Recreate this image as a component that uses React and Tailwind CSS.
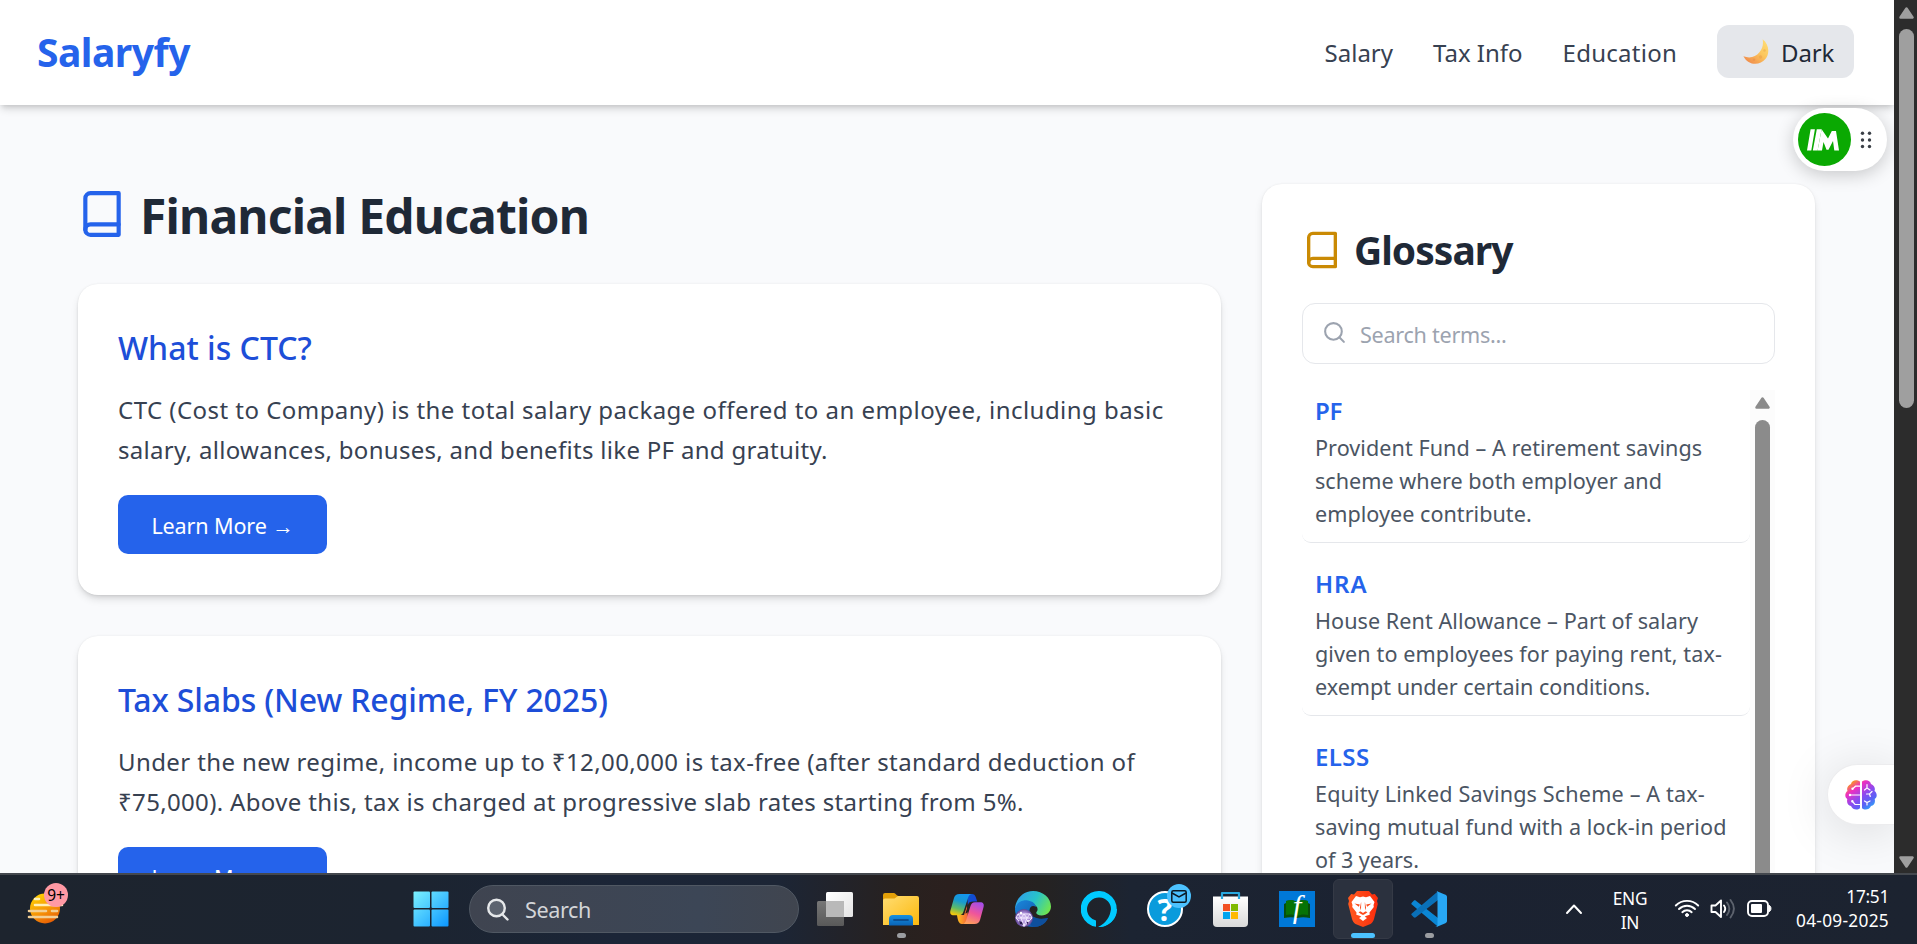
import React from "react";
import { FiBook, FiSearch } from "react-icons/fi";

const GLOSSARY = [
  {
    term: "PF",
    track: "tracking-[-0.3px]",
    lines: [
      ["Provident Fund – A retirement savings", "tracking-[0.05px]"],
      ["scheme where both employer and", "tracking-[0.02px]"],
      ["employee contribute.", "tracking-[0.02px]"],
    ],
  },
  {
    term: "HRA",
    track: "tracking-[0.9px]",
    lines: [
      ["House Rent Allowance – Part of salary", "tracking-[0.05px]"],
      ["given to employees for paying rent, tax-", "tracking-[0.09px]"],
      ["exempt under certain conditions.", "tracking-[-0.02px]"],
    ],
  },
  {
    term: "ELSS",
    track: "tracking-[0.4px]",
    lines: [
      ["Equity Linked Savings Scheme – A tax-", "tracking-[0.15px]"],
      ["saving mutual fund with a lock-in period", "tracking-[0.1px]"],
      ["of 3 years.", "tracking-[-0.05px]"],
    ],
  },
];

const ARTICLES = [
  {
    title: "What is CTC?",
    track: "tracking-normal",
    lines: [
      ["CTC (Cost to Company) is the total salary package offered to an employee, including basic", "tracking-[0.46px]"],
      ["salary, allowances, bonuses, and benefits like PF and gratuity.", "tracking-[0.3px]"],
    ],
  },
  {
    title: "Tax Slabs (New Regime, FY 2025)",
    track: "tracking-[-0.14px]",
    lines: [
      ["Under the new regime, income up to ₹12,00,000 is tax-free (after standard deduction of", "tracking-[0.39px]"],
      ["₹75,000). Above this, tax is charged at progressive slab rates starting from 5%.", "tracking-[0.34px]"],
    ],
  },
];

function Moon() {
  return (
    <svg width="26" height="26" viewBox="0 0 26 26">
      <defs>
        <linearGradient id="moon" x1="1" y1="0" x2="0.2" y2="1">
          <stop offset="0" stopColor="#ffe07a" />
          <stop offset="0.5" stopColor="#fcc65c" />
          <stop offset="1" stopColor="#f08a4b" />
        </linearGradient>
      </defs>
      <path d="M19.6 .2c6.300 4.700 7.600 14 2.800 19.800C17 26.800 5.400 27 .4 17.300c6.200 2.300 12.300.9 16-4C19.800 9.300 20.500 5 19.600.2z" fill="url(#moon)" />
      <circle cx="17.500" cy="18" r="1.700" fill="#eda64c" opacity=".7" />
      <circle cx="21.500" cy="11.500" r="1.200" fill="#eeb04f" opacity=".7" />
      <circle cx="11" cy="20.800" r="1.300" fill="#e9904a" opacity=".7" />
    </svg>
  );
}

function Header() {
  return (
    <header className="relative z-10 flex h-[105px] shrink-0 items-center justify-between bg-white pr-10 pl-[37px] shadow-[0_5px_8px_-1px_rgba(0,0,0,0.14),0_3px_5px_-2px_rgba(0,0,0,0.12)]">
      <span className="mb-px text-[39px] leading-[50px] font-bold tracking-[-0.5px] text-[#2563eb]">Salaryfy</span>
      <nav className="flex items-center gap-10 text-[24px] leading-[36px] text-[#374151]">
        <span>Salary</span>
        <span>Tax Info</span>
        <span className="tracking-[0.25px]">Education</span>
        <span className="mb-[2px] flex h-[53px] w-[137px] items-center rounded-[12px] bg-[#e5e7eb] pl-[26px] text-[#1f2937]">
          <Moon />
          <span className="ml-[12px] pt-[2px] tracking-[-0.1px]">Dark</span>
        </span>
      </nav>
    </header>
  );
}

function Article({ item }) {
  return (
    <article className="h-[311px] shrink-0 rounded-[20px] bg-white p-10 shadow-[0_0_2px_rgba(0,0,0,0.08),0_5px_8px_-1px_rgba(0,0,0,0.12),0_3px_5px_-2px_rgba(0,0,0,0.1)]">
      <h2 className={"text-[32px] leading-[48px] font-medium text-[#1d4ed8] " + item.track}>{item.title}</h2>
      <div className="mt-[18px] text-[24px] leading-[40px] whitespace-nowrap text-[#374151]">
        {item.lines.map(([text, track]) => (
          <p key={text} className={track}>{text}</p>
        ))}
      </div>
      <button className="mt-[25px] flex h-[59px] w-[209px] items-center justify-center rounded-[10px] bg-[#2563eb] pt-[3px] text-[21.6px] tracking-[-0.15px] whitespace-nowrap text-white">
        Learn More →
      </button>
    </article>
  );
}

function Glossary() {
  return (
    <aside className="h-[900px] w-[553px] shrink-0 rounded-[20px] bg-white p-10 shadow-[0_0_2px_rgba(0,0,0,0.08),0_5px_8px_-1px_rgba(0,0,0,0.12)]">
      <h2 className="flex h-[52px] items-center text-[#1f2937]">
        <FiBook className="text-[40px] text-[#ca8a04]" />
        <span className="mb-px ml-[12px] text-[39px] leading-[52px] font-bold tracking-[-1px]">Glossary</span>
      </h2>
      <div className="mt-[27px] flex h-[61px] items-center rounded-[13px] border border-[#e5e7eb] pl-[19px] text-[#9ca3af]">
        <FiSearch className="mb-[2px] text-[25px]" />
        <span className="ml-[13px] pt-[3px] text-[21.6px] leading-[30px] tracking-[-0.28px]">Search terms...</span>
      </div>
      <div className="mt-[26px] flex h-[520px]">
        <ul className="flex w-[448px] flex-col gap-[20px]">
          {GLOSSARY.map((g) => (
            <li key={g.term} className="h-[153px] shrink-0 rounded-[9px] border-b border-[#e5e7eb] px-[13px] pt-[3px]">
              <h3 className={"text-[24px] leading-[36px] font-semibold text-[#2563eb] " + g.track}>{g.term}</h3>
              <div className="mt-[2px] text-[21.6px] leading-[33px] whitespace-nowrap text-[#4b5563]">
                {g.lines.map(([text, track]) => (
                  <p key={text} className={track}>{text}</p>
                ))}
              </div>
            </li>
          ))}
        </ul>
        <div className="flex w-[25px] flex-col items-center bg-[#fcfcfc] pt-[7px]">
          <svg width="15" height="12" viewBox="0 0 15 12">
            <path d="M7.500 1.500L13.500 10.500H1.500z" fill="#8b8b8b" stroke="#8b8b8b" strokeWidth="2.500" strokeLinejoin="round" />
          </svg>
          <div className="mt-[11px] w-[15px] flex-1 rounded-t-full bg-[#8b8b8b]" />
        </div>
      </div>
    </aside>
  );
}

function PageScrollbar() {
  return (
    <div className="flex h-full w-[23px] shrink-0 flex-col items-center bg-[#2c2c2c] pt-[7px] pb-[5px] pl-px">
      <svg width="15" height="12" viewBox="0 0 15 12">
        <path d="M7.500 1.500L13.500 10.500H1.500z" fill="#9f9f9f" stroke="#9f9f9f" strokeWidth="2.500" strokeLinejoin="round" />
      </svg>
      <div className="mt-[10px] h-[379px] w-[15px] rounded-full bg-[#9f9f9f]" />
      <svg className="mt-auto" width="15" height="12" viewBox="0 0 15 12">
        <path d="M7.500 10.500L13.500 1.500H1.500z" fill="#9f9f9f" stroke="#9f9f9f" strokeWidth="2.500" strokeLinejoin="round" />
      </svg>
    </div>
  );
}

function FloatingPill() {
  return (
    <div className="absolute top-[108px] left-[1793px] z-20 flex h-[63px] w-[94px] items-center rounded-full bg-white pl-[5px] shadow-[0_4px_18px_rgba(0,0,0,0.2)]">
      <svg width="53" height="53" viewBox="0 0 53 53">
        <circle cx="26.500" cy="26.500" r="26.500" fill="#0aa902" />
        <path d="M12.600 16.300h4.300L13.300 37.500H9zM18.800 16.300h4.800L19.600 37.500h-4.800z" fill="#fff" />
        <path d="M23.600 16.300L30 25.500L33.800 18H38L41 37.500H36.300L35 28L30.500 36.800H28.500L25.500 29L24 37.500H19.600z" fill="#fff" />
      </svg>
      <svg className="ml-[9px]" width="12" height="18" viewBox="0 0 12 18" fill="#3a3f46">
        <circle cx="2.500" cy="2.200" r="1.700" /><circle cx="9.500" cy="2.200" r="1.700" />
        <circle cx="2.500" cy="9" r="1.700" /><circle cx="9.500" cy="9" r="1.700" />
        <circle cx="2.500" cy="15.500" r="1.700" /><circle cx="9.500" cy="15.500" r="1.700" />
      </svg>
    </div>
  );
}

function BrainPill() {
  return (
    <div className="absolute top-[764px] left-[1827px] z-20 flex h-[61px] w-[67px] items-center rounded-l-full border border-r-0 border-[#ececee] bg-white pl-[17px] shadow-[0_6px_50px_rgba(0,0,0,0.13)]">
      <svg width="32" height="30" viewBox="0 0 32 30">
        <defs>
          <linearGradient id="brain" x1="0.1" y1="0" x2="0.9" y2="1">
            <stop offset="0.08" stopColor="#fb9a1c" />
            <stop offset="0.28" stopColor="#ee2fc0" />
            <stop offset="0.55" stopColor="#8a4bf0" />
            <stop offset="0.75" stopColor="#5a62f5" />
            <stop offset="1" stopColor="#22b8fa" />
          </linearGradient>
        </defs>
        <path d="M15 1.500C12-.5 7-.5 6 4 2.500 5.500 1.500 8.500 2.500 11-.5 13-.3 17.500 2.300 19c-1 4 1 6.500 3.700 7 1.500 3.800 6.500 4.500 9 2.200zM17 1.500C20-.5 25-.5 26 4c3.500 1.500 4.500 4.500 3.500 7 3 2 2.800 6.500.2 8 1 4-1 6.500-3.700 7-1.500 3.800-6.500 4.500-9 2.200z" fill="url(#brain)" />
        <g fill="none" stroke="#fff" strokeWidth="1.200" strokeLinecap="round">
          <path d="M15 6.200h-4.500L8 8.500M5.500 15H15M15 24.500h-5L7.500 21.500M22 4.500v3.500l-2.500 2M22 8l3 2M21.500 14h3l2.500-2.500M24.500 14l.8 2.500M19.500 21l2.500 1.500 3-1.500M22 22.500V25" />
          <circle cx="7.500" cy="8.800" r=".6" /><circle cx="5" cy="15" r=".6" /><circle cx="7.300" cy="21.200" r=".6" />
        </g>
      </svg>
    </div>
  );
}

function Slot({ children, dot }) {
  return (
    <div className="relative flex h-[60px] w-[60px] shrink-0 items-center justify-center">
      {children}
      {dot && <span className="absolute bottom-[1px] left-[26px] h-[5px] w-[9px] rounded-full bg-[#9b9da1]" />}
    </div>
  );
}

function WeatherIcon() {
  return (
    <div className="relative h-[42px] w-[42px]">
      <svg width="42" height="42" viewBox="0 0 42 42">
        <defs>
          <linearGradient id="sun" x1="0.2" y1="0" x2="0.7" y2="1">
            <stop offset="0" stopColor="#ffd400" />
            <stop offset="0.6" stopColor="#f59108" />
            <stop offset="1" stopColor="#e65a04" />
          </linearGradient>
        </defs>
        <circle cx="18" cy="26.500" r="15" fill="url(#sun)" />
        <g strokeWidth="2.600" strokeLinecap="round">
          <path d="M8 17h4M8 23h27" stroke="#fff0b8" />
          <path d="M2 29h17M25 29h5M2 35h28" stroke="#f3cf94" />
        </g>
      </svg>
      <span className="absolute top-[1px] left-[17px] flex h-6 w-6 items-center justify-center rounded-full bg-[#ff99a4] text-[15.500px] leading-6 tracking-[-0.2px] text-black">9+</span>
    </div>
  );
}

function StartIcon() {
  return (
    <svg width="36" height="36" viewBox="0 0 36 36">
      <defs>
        <linearGradient id="win" gradientUnits="userSpaceOnUse" x1="0" y1="0" x2="36" y2="36">
          <stop offset="0" stopColor="#7df3ff" />
          <stop offset="0.5" stopColor="#45c5ff" />
          <stop offset="1" stopColor="#0a95ff" />
        </linearGradient>
      </defs>
      <g fill="url(#win)">
        <rect x=".5" y=".5" width="16.500" height="16.500" rx="1" /><rect x="18.500" y=".5" width="17" height="16.500" rx="1" />
        <rect x=".5" y="18.500" width="16.500" height="17" rx="1" /><rect x="18.500" y="18.500" width="17" height="17" rx="1" />
      </g>
    </svg>
  );
}

function TaskViewIcon() {
  return (
    <svg width="36" height="36" viewBox="0 0 36 36">
      <defs>
        <linearGradient id="tv1" x1="0" y1="0" x2="1" y2="1"><stop offset="0" stopColor="#fff" /><stop offset="1" stopColor="#e4e4e4" /></linearGradient>
        <linearGradient id="tv2" x1="0" y1="0" x2="0" y2="1"><stop offset="0" stopColor="#777" /><stop offset="1" stopColor="#595959" /></linearGradient>
      </defs>
      <rect x="0" y="10" width="27" height="25" rx="1.500" fill="url(#tv2)" />
      <rect x="9" y="1" width="27" height="25" rx="1.500" fill="url(#tv1)" />
      <rect x="9" y="10" width="18" height="16" fill="#b9b9b9" />
    </svg>
  );
}

function FolderIcon() {
  return (
    <svg width="36" height="36" viewBox="0 0 36 36">
      <defs>
        <linearGradient id="fo" x1="0" y1="0" x2="1" y2="1"><stop offset="0" stopColor="#ffdd72" /><stop offset="1" stopColor="#fcb80c" /></linearGradient>
        <linearGradient id="fb" x1="0" y1="0" x2="0" y2="1"><stop offset="0" stopColor="#1590e0" /><stop offset="1" stopColor="#0a63b6" /></linearGradient>
      </defs>
      <path d="M0 4a2 2 0 012-2h9c1.500 0 2.500 3 4.500 3H20v6H0z" fill="#e3a008" />
      <path d="M0 9.500a2 2 0 012-2h9.500L15 5h19a2 2 0 012 2v27H0z" fill="url(#fo)" />
      <path d="M6 34.500V28a4 4 0 014-4h16a4 4 0 014 4v6.500z" fill="url(#fb)" />
      <path d="M11 29h14" stroke="#0b4f92" strokeWidth="1.800" strokeLinecap="round" />
    </svg>
  );
}

function CopilotIcon() {
  return (
    <svg width="36" height="36" viewBox="0 0 36 36">
      <defs>
        <linearGradient id="cp1" x1="0.6" y1="0" x2="0.3" y2="1"><stop offset="0" stopColor="#1496ee" /><stop offset="0.35" stopColor="#189ad0" /><stop offset="0.7" stopColor="#5fbb66" /><stop offset="1" stopColor="#f4c80c" /></linearGradient>
        <linearGradient id="cp2" x1="0.7" y1="0" x2="0.3" y2="1"><stop offset="0" stopColor="#a64de8" /><stop offset="0.5" stopColor="#f0559a" /><stop offset="1" stopColor="#ffa25a" /></linearGradient>
        <linearGradient id="cp3" x1="0" y1="0" x2="1" y2="1"><stop offset="0" stopColor="#0a56c8" /><stop offset="1" stopColor="#1c3fe0" /></linearGradient>
        <linearGradient id="cp4" x1="0" y1="0" x2="1" y2="0"><stop offset="0" stopColor="#ffc21a" /><stop offset="1" stopColor="#f5603c" /></linearGradient>
      </defs>
      <path d="M18 3h5c2 0 3 1.200 3.700 3l1.500 4.500h-4c-3 0-4.500 1.200-5.300 4z" fill="url(#cp3)" />
      <path d="M8 24h7l3-9 1 12c-.8 3-2 6-5 6-3.500 0-5-1.500-6-9z" fill="url(#cp4)" />
      <path d="M10.500 3h12.200c-2 .3-3 2-3.700 4L14.500 20.500c-.8 2.500-2 3.700-4.500 3.700H5c-3.500 0-4.300-2-3.500-5L5 7c.8-2.700 2.500-4 5.500-4z" fill="url(#cp1)" />
      <path d="M25.500 33H13.500c2-.3 3-2 3.700-4l4.300-14c.8-2.500 2-3.800 4.500-3.800h5c3.500 0 4.300 2 3.500 5L31 29c-.8 2.700-2.500 4-5.500 4z" fill="url(#cp2)" />
      <path d="M16.300 22.500l3.200-9.500c.5-1.200 1.200-1.800 2.200-2l-2.700 9.500c-.5 1.300-1.400 2-2.700 2z" fill="#2a211e" />
    </svg>
  );
}

function EdgeIcon() {
  return (
    <svg width="36" height="36" viewBox="0 0 36 36">
      <defs>
        <linearGradient id="eg1" x1="0" y1="0.3" x2="1" y2="0.7"><stop offset="0" stopColor="#2f9fea" /><stop offset="0.5" stopColor="#28c3c9" /><stop offset="1" stopColor="#72e64c" /></linearGradient>
        <linearGradient id="eg2" x1="0" y1="0" x2="1" y2="1"><stop offset="0" stopColor="#1b86dc" /><stop offset="1" stopColor="#0b4b98" /></linearGradient>
        <radialGradient id="gem"><stop offset="0" stopColor="#d9c6f5" /><stop offset="0.6" stopColor="#a88bd6" /><stop offset="1" stopColor="#5b4192" /></radialGradient>
      </defs>
      <path d="M0 18C.5 8 8 0 18 0s18 7 18 15.500c0 5-4 9-9.500 9-4 0-6-1.800-5-3.500 2.500-3 .5-7-4-7.500C11 12.500 3 13 0 18z" fill="url(#eg1)" />
      <path d="M0 18c1-6 7-9.500 13-8.500 5 .8 7.500 3.500 8 6.500-3.500-2.500-7 0-6.500 4.500.6 5.500 8 9.500 18.500 6.500C30.500 33 25 36 18 36 8 36 0 28 0 18z" fill="url(#eg2)" />
      <path d="M14.500 20c1 6 9 9.500 18.500 7C30 33 25 36 18 36c-4-3-5.500-10-3.500-16z" fill="#0e4f9c" />
      <circle cx="9" cy="27" r="9" fill="url(#gem)" />
      <path d="M3 23h12l2 4-8 8.500L1 27zM1 27h16M3 23l3 4 3-4 3 4 3-4M6 27l3 8 3-8" fill="none" stroke="#f3eaff" strokeWidth="1" />
      <path d="M4 30l3 1 1 3-3-1zM12 31l2-1-2 4z" fill="#2b1d52" />
      <circle cx="6" cy="22" r="1.200" fill="#fff" /><circle cx="13" cy="30" r="1" fill="#fff" />
    </svg>
  );
}

function AlexaIcon() {
  return (
    <svg width="36" height="36" viewBox="0 0 36 36">
      <path fillRule="evenodd" d="M15 35.800A18 18 0 1118 36c8-3 12-9 12-17A12 12 0 106 18c0 6 4 10 9 11.500z" fill="#00caff" />
      <path d="M17 36A18 18 0 0036 18H30c-1 8-5 14-13 18z" fill="#00caff" />
    </svg>
  );
}

function HelpIcon() {
  return (
    <div className="relative h-9 w-9">
      <div className="flex h-9 w-9 items-center justify-center rounded-full border-2 border-white bg-[#0a9bdc] text-[31px] leading-9 font-bold text-white">?</div>
      <span className="absolute top-[-7px] left-5 flex h-6 w-6 items-center justify-center rounded-full bg-[#4cc2ff]">
        <svg width="16" height="13" viewBox="0 0 16 13" fill="none" stroke="#0b1a24" strokeWidth="1.500">
          <rect x=".8" y=".8" width="14.400" height="11.400" rx="1.500" /><path d="M1 3l7 4 7-4" />
        </svg>
      </span>
    </div>
  );
}

function StoreIcon() {
  return (
    <svg width="36" height="36" viewBox="0 0 36 36">
      <defs><linearGradient id="st" x1="0" y1="0" x2="0" y2="1"><stop offset="0" stopColor="#fff" /><stop offset="1" stopColor="#d9d9d9" /></linearGradient></defs>
      <path d="M0 5.500h35V32a4 4 0 01-4 4H4a4 4 0 01-4-4z" fill="url(#st)" />
      <path d="M9 8V2h17v6" fill="none" stroke="#2aa9e0" strokeWidth="2.200" strokeLinejoin="round" />
      <rect x="10" y="13" width="7" height="7" fill="#f25022" /><rect x="18" y="13" width="7" height="7" fill="#7fba00" />
      <rect x="10" y="21" width="7" height="7" fill="#00a4ef" /><rect x="18" y="21" width="7" height="7" fill="#ffb900" />
    </svg>
  );
}

function BookIcon() {
  return (
    <div className="relative flex h-9 w-9 items-center justify-center bg-[#0078d7]">
      <svg className="absolute" width="36" height="36" viewBox="0 0 36 36">
        <path d="M5 13l2-1V10c4-1.500 8-1 11 1 3-2 7-2.500 11-1v2l2 1v14c-5-1-9-1-13 0-4-1-8-1-13 0z" fill="#064f0c" />
        <path d="M7 10c4-1.500 8-1 11 1 3-2 7-2.500 11-1v14c-4-1-8-.5-11 1-3-1.500-7-2-11-1z" fill="#067306" />
      </svg>
      <span className="relative pb-[4px] font-['Liberation_Serif',serif] text-[31px] leading-8 text-white italic">f</span>
    </div>
  );
}

function BraveIcon() {
  return (
    <svg width="30" height="36" viewBox="0 0 30 36">
      <defs><linearGradient id="br" x1="0" y1="0" x2="1" y2="0"><stop offset="0" stopColor="#ff5a1f" /><stop offset="1" stopColor="#fb2c0c" /></linearGradient></defs>
      <path d="M9 0h12l3 3.500 2.800-.5L30 7l-1 3 .8 3L26 28c-.7 2.300-1.500 3.500-3.500 5L15 36l-7.500-3C5.500 31.500 4.700 30.300 4 28L.2 13 1 10 0 7l3.200-4 2.800.5z" fill="url(#br)" />
      <path d="M8 5l4 1.200 3-.6 3 .6L22 5l4.500 6-1 3 .3 2-4.300 5.500.2 2.300-4 1.200L15 27.500 12.300 25l-4-1.200.2-2.300L4.200 16l.3-2-1-3z" fill="#fff" />
      <path d="M6.500 12.500l5.300 1-1 2.200zM23.500 12.500l-5.300 1 1 2.200zM13 11.500l-1 5 1 3.500-2.500 1.200L13 23l2 1 2-1 2.500-1.800L17 20l1-3.500-1-5" fill="#fb4a1a" />
      <path d="M13.300 9.500h3.400l.3 8.500 1 2-3 2-3-2 1-2z" fill="#fff" />
      <path d="M11 27l4-2.200L19 27l-4 3z" fill="#fff" />
    </svg>
  );
}

function CodeIcon() {
  return (
    <svg width="36" height="36" viewBox="0 0 36 36">
      <path d="M.8 11.700L2.700 9.800c.7-.6 1.500-.6 2.200-.1L27 27v8.800L.8 13.500c-.6-.5-.6-1.300 0-1.800z" fill="#0b86d4" />
      <path d="M.8 24.300l1.900 1.900c.7.600 1.500.6 2.200.1L27 9V.2L.8 22.500c-.6.5-.6 1.300 0 1.800z" fill="#0a70b8" />
      <path d="M26 35.800c-.8.2-1.400 0-2-.5 1 .8 2.500.2 2.500-1.300V2c0-1.500-1.500-2.100-2.500-1.300.6-.5 1.300-.6 2-.4l8.400 3.500c1 .4 1.600 1.200 1.600 2.200v24c0 1-.6 1.800-1.600 2.200z" fill="#28a8f5" />
    </svg>
  );
}

function Taskbar() {
  return (
    <footer className="relative z-30 flex h-[71px] shrink-0 border-t-2 border-[#44484e] bg-[linear-gradient(90deg,#1d242e_0px,#1c2430_400px,#1b2537_620px,#1c2535_780px,#28211f_900px,#2b201e_950px,#252221_1040px,#1c2432_1130px,#1b2231_1400px,#1c2330_1917px)] text-white">
      <div className="flex w-[401px] shrink-0 pt-[7px] pl-[27px]"><WeatherIcon /></div>
      <div className="flex items-start gap-[6px] pt-[4px]">
        <Slot><StartIcon /></Slot>
        <div className="mt-[6px] ml-[2px] flex h-12 w-[330px] shrink-0 items-center rounded-full border border-[#505863] bg-[linear-gradient(90deg,#3f4450,#3c4656_70%,#40454f)] pl-[17px]">
          <svg width="22" height="23" viewBox="0 0 22 23" fill="none" stroke="#e6e8ea" strokeWidth="2.400" strokeLinecap="round">
            <circle cx="9.500" cy="10" r="8.300" fill="#5c636f" /><path d="M15.500 16.500l5 5" />
          </svg>
          <span className="ml-[16px] pt-[2px] text-[21.600px] leading-[30px] tracking-[-0.39px] text-[#d3d5d8]">Search</span>
        </div>
        <Slot><TaskViewIcon /></Slot>
        <Slot dot><FolderIcon /></Slot>
        <Slot><CopilotIcon /></Slot>
        <Slot><EdgeIcon /></Slot>
        <Slot><AlexaIcon /></Slot>
        <Slot><HelpIcon /></Slot>
        <Slot><StoreIcon /></Slot>
        <Slot><BookIcon /></Slot>
        <div className="relative flex h-[60px] w-[60px] shrink-0 items-center justify-center rounded-[6px] border border-[#353a46] bg-[#2b313e]">
          <BraveIcon />
          <span className="absolute bottom-0 left-[17px] h-[5px] w-6 rounded-full bg-[#4cc2ff]" />
        </div>
        <Slot dot><CodeIcon /></Slot>
      </div>
      <div className="ml-auto flex pr-[28px]">
        <svg className="mt-[28px]" width="18" height="12" viewBox="0 0 18 12" fill="none" stroke="#fff" strokeWidth="2" strokeLinecap="round" strokeLinejoin="round">
          <path d="M2 10l7-7.500L16 10" />
        </svg>
        <div className="ml-[29px] w-[36px] pt-[12px] text-center text-[17.300px] leading-[24px] tracking-[-0.3px]">
          <p>ENG</p>
          <p>IN</p>
        </div>
        <svg className="mt-[22px] ml-[26px]" width="26" height="22" viewBox="0 0 26 22" fill="none" stroke="#fff" strokeWidth="1.900" strokeLinecap="round">
          <path d="M1.800 8.500a15.800 15.800 0 0122.400 0M5 12a11.300 11.300 0 0116 0M8.300 15.200a6.700 6.700 0 019.400 0" />
          <circle cx="13" cy="18" r="1.500" fill="#fff" strokeWidth="1" />
        </svg>
        <svg className="mt-[23px] ml-[10px]" width="26" height="22" viewBox="0 0 26 22" fill="none" stroke="#fff" strokeWidth="1.900" strokeLinecap="round" strokeLinejoin="round">
          <path d="M1.500 7.500h4L11 2.500v16.500l-5.500-5h-4zM14 7.500c1.500 2 1.500 4.500 0 6.500" />
          <path d="M17 4.500c3 4 3 8.500 0 12.500M20.500 2c4.300 5.500 4.300 12 0 17.500" stroke="#5d636e" />
        </svg>
        <svg className="mt-[25px] ml-[11px]" width="25" height="18" viewBox="0 0 25 18">
          <rect x="1" y="1" width="20" height="15" rx="4" fill="none" stroke="#fff" strokeWidth="1.900" />
          <rect x="4" y="4" width="11" height="9" rx="1" fill="#fff" />
          <path d="M22 5.500c2.600 0 2.600 6 0 6z" fill="#fff" stroke="#fff" />
        </svg>
        <div className="ml-[23px] w-[94px] pt-[10px] text-right text-[17.300px] leading-[24px] whitespace-nowrap">
          <p className="tracking-[-0.3px]">17:51</p>
          <p className="tracking-[0.28px]">04-09-2025</p>
        </div>
      </div>
    </footer>
  );
}

export default function App() {
  return (
    <div className="flex h-[944px] w-[1917px] flex-col overflow-hidden bg-[#f9fafb] font-['Noto_Sans','Open_Sans',sans-serif]">
      <div className="relative flex h-[873px] shrink-0 overflow-hidden">
        <div className="flex w-[1894px] shrink-0 flex-col overflow-hidden bg-[#f9fafc]">
          <Header />
          <main className="flex items-start gap-[41px] pt-[79px] pl-[78px]">
            <section className="flex w-[1143px] shrink-0 flex-col">
              <h1 className="mb-10 flex h-[60px] items-center text-[#1f2937]">
                <FiBook className="-ml-px text-[50px] text-[#2563eb]" />
                <span className="ml-[13px] pt-[3px] text-[48px] leading-[58px] font-bold tracking-[-0.83px]">Financial Education</span>
              </h1>
              <div className="flex flex-col gap-[41px]">
                {ARTICLES.map((a) => (
                  <Article key={a.title} item={a} />
                ))}
              </div>
            </section>
            <Glossary />
          </main>
        </div>
        <FloatingPill />
        <BrainPill />
        <div className="z-20"><PageScrollbar /></div>
      </div>
      <Taskbar />
    </div>
  );
}
